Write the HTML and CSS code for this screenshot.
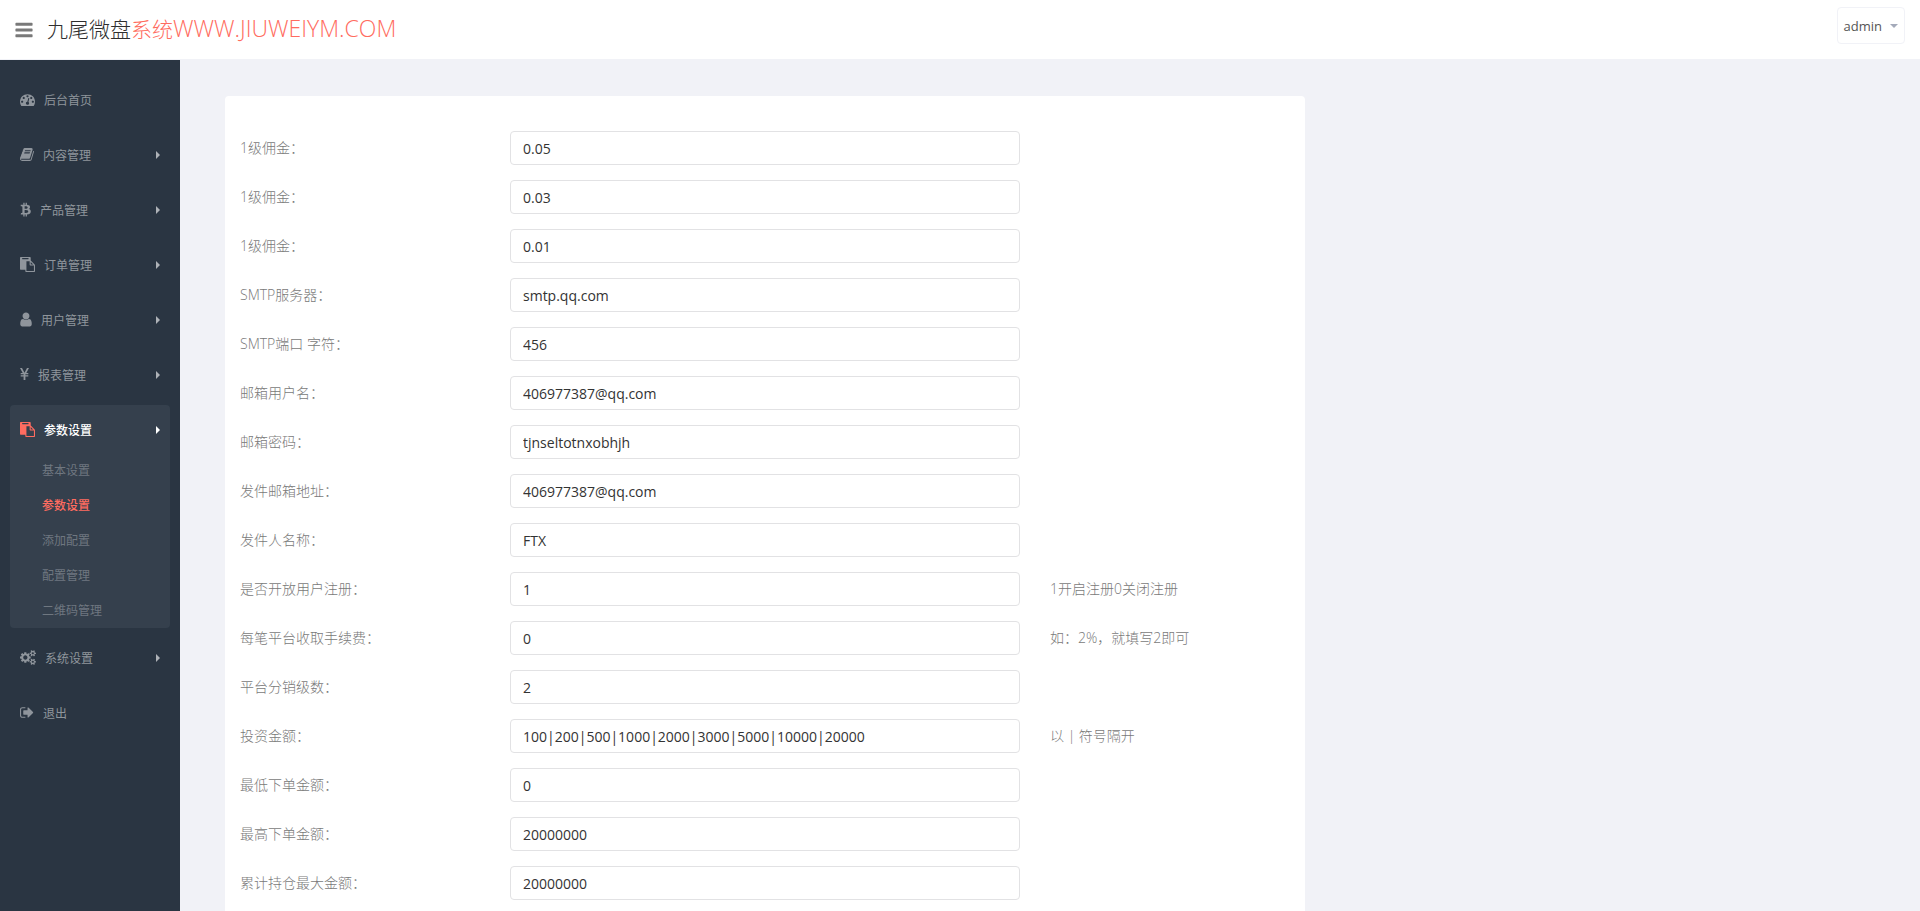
FILE: index.html
```html
<!DOCTYPE html>
<html lang="zh-CN">
<head>
    <meta charset="UTF-8">
    <meta name="viewport" content="width=device-width, initial-scale=1.0">
    <title>参数设置</title>
    <link rel="stylesheet" href="styles.css">
</head>
<body>
    <header class="header">
        <button type="button" class="toggle" aria-label="菜单">
            <svg width="18" height="20" viewBox="128 0 1536 1792"><path d="M1664 1344v128q0 26-19 45t-45 19h-1408q-26 0-45-19t-19-45v-128q0-26 19-45t45-19h1408q26 0 45 19t19 45zm0-512v128q0 26-19 45t-45 19h-1408q-26 0-45-19t-19-45v-128q0-26 19-45t45-19h1408q26 0 45 19t19 45zm0-512v128q0 26-19 45t-45 19h-1408q-26 0-45-19t-19-45v-128q0-26 19-45t45-19h1408q26 0 45 19t19 45z"/></svg>
        </button>
        <a href="#" class="logo">九尾微盘<span>系统<span class="domain">WWW.JIUWEIYM.COM</span></span></a>
        <button type="button" class="user-menu">admin<span class="caret"></span></button>
    </header>

    <div class="layout">
        <nav class="sidebar">
            <ul class="menu">
                <li>
                    <a href="#" class="menu-link">
                        <svg width="15" height="15" viewBox="0 0 1792 1792"><path d="M384 1152q0-53-37.5-90.5t-90.5-37.5-90.5 37.5-37.5 90.5 37.5 90.5 90.5 37.5 90.5-37.5 37.5-90.5zm192-448q0-53-37.5-90.5t-90.5-37.5-90.5 37.5-37.5 90.5 37.5 90.5 90.5 37.5 90.5-37.5 37.5-90.5zm428 481l101-382q6-26-7.5-48.5t-38.5-29.5-48 6.5-30 39.5l-101 382q-60 5-107 43.5t-63 98.5q-20 77 20 146t117 89 146-20 89-117q16-60-6-117t-72-91zm660-33q0-53-37.5-90.5t-90.5-37.5-90.5 37.5-37.5 90.5 37.5 90.5 90.5 37.5 90.5-37.5 37.5-90.5zm-640-640q0-53-37.5-90.5t-90.5-37.5-90.5 37.5-37.5 90.5 37.5 90.5 90.5 37.5 90.5-37.5 37.5-90.5zm448 192q0-53-37.5-90.5t-90.5-37.5-90.5 37.5-37.5 90.5 37.5 90.5 90.5 37.5 90.5-37.5 37.5-90.5zm320 448q0 261-141 483-19 29-54 29h-1402q-35 0-54-29-141-221-141-483 0-182 71-348t191-286 286-191 348-71 348 71 286 191 191 286 71 348z"/></svg>
                        <span>后台首页</span>
                    </a>
                </li>
                <li>
                    <a href="#" class="menu-link has-sub">
                        <svg width="14" height="15" viewBox="64 0 1664 1792"><path d="M1703 478q40 57 18 129l-275 906q-19 64-76.5 107.5t-122.5 43.5h-923q-77 0-148.5-53.5t-99.5-131.5q-24-67-2-127 0-4 3-27t4-37q1-8-3-21.5t-3-19.5q2-11 8-21t16.5-23.5 16.5-23.5q23-38 45-91.5t30-91.5q3-10 .5-30t-.5-28q3-11 17-28t17-23q21-36 42-92t25-90q1-9-2.5-32t.5-28q4-13 22-30.5t22-22.5q19-26 42.5-84.5t27.5-96.5q1-8-3-25.5t-2-26.5q2-8 9-18t18-23 17-21q8-12 16.5-30.5t15-35 16-36 19.5-32 26.5-23.5 36-11.5 47.5 5.5l-1 3q38-9 51-9h761q74 0 114 56t18 130l-274 906q-36 119-71.5 153.5t-128.5 34.5h-869q-27 0-38 15-11 16-1 43 24 70 144 70h923q29 0 56-15.5t35-41.5l300-987q7-22 5-57 38 15 59 43zm-1064 2q-4 13 2 22.5t20 9.5h608q13 0 25.5-9.5t16.5-22.5l21-64q4-13-2-22.5t-20-9.5h-608q-13 0-25.5 9.5t-16.5 22.5zm-83 256q-4 13 2 22.5t20 9.5h608q13 0 25.5-9.5t16.5-22.5l21-64q4-13-2-22.5t-20-9.5h-608q-13 0-25.5 9.5t-16.5 22.5z"/></svg>
                        <span>内容管理</span>
                    </a>
                </li>
                <li>
                    <a href="#" class="menu-link has-sub">
                        <svg width="11" height="15" viewBox="228 0 1280 1792"><path d="M1408 590q18 182-131 258 117 28 175 103t45 214q-7 71-32.5 125t-64.5 89-97 58.5-121.5 34.5-145.5 15v255h-154v-251q-80 0-122-1v252h-154v-255q-18 0-54-.5t-55-.5h-200l31-183h111q50 0 58-51v-402h16q-6-1-16-1v-287q-13-68-89-68h-111v-164l212 1q64 0 97-1v-252h154v247q82-2 122-2v-245h154v252q79 7 140 22.5t113 45 82.5 78 36.5 114.5zm-215 545q0-36-15-64t-37-46-57.5-30.5-65.5-18.5-74-9-69-3-64.5 1-47.5 1v338q8 0 37 .5t48 .5 53-1.5 58.5-4 57-8.5 55.5-14 47.5-21 39.5-30 24.5-40 9.5-51zm-71-476q0-33-12.5-58.5t-30.5-42-48-28-55-16.5-61.5-8-58-2.5-54 1-39.5.5v307q5 0 34.5.5t46.5 0 50-2 55-5.5 51.5-11 48.5-18.5 37-27 27-38.5 9-51z"/></svg>
                        <span>产品管理</span>
                    </a>
                </li>
                <li>
                    <a href="#" class="menu-link has-sub">
                        <svg width="15" height="15" viewBox="0 0 1792 1792"><path d="M768 1664h896v-640h-416q-40 0-68-28t-28-68v-416h-384v1152zm256-1440v-64q0-13-9.5-22.5t-22.5-9.5h-704q-13 0-22.5 9.5t-9.5 22.5v64q0 13 9.5 22.5t22.5 9.5h704q13 0 22.5-9.5t9.5-22.5zm256 672h299l-299-299v299zm512 128v672q0 40-28 68t-68 28h-960q-40 0-68-28t-28-68v-160h-544q-40 0-68-28t-28-68v-1344q0-40 28-68t68-28h1088q40 0 68 28t28 68v328q21 13 36 28l408 408q28 28 48 76t20 88z"/></svg>
                        <span>订单管理</span>
                    </a>
                </li>
                <li>
                    <a href="#" class="menu-link has-sub">
                        <svg width="12" height="15" viewBox="229 60 1334 1668"><path d="M1536 1399q0 109-62.5 187t-150.5 78h-854q-88 0-150.5-78t-62.5-187q0-85 8.5-160.5t31.5-152 58.5-131 94-89 134.5-34.5q131 128 313 128t313-128q76 0 134.5 34.5t94 89 58.5 131 31.5 152 8.5 160.5zm-256-887q0 159-112.5 271.5t-271.5 112.5-271.5-112.5-112.5-271.5 112.5-271.5 271.5-112.5 271.5 112.5 112.5 271.5z"/></svg>
                        <span>用户管理</span>
                    </a>
                </li>
                <li>
                    <a href="#" class="menu-link has-sub">
                        <svg width="9" height="15" viewBox="0 0 9 15"><path d="M0 1h2l2.500 4.700L7 1h2L6.300 6H8.300v1.200H5.400v1.100h2.900v1.200H5.400V13H3.600V9.500H.700V8.300h2.900V7.200H.700V6h2z"/></svg>
                        <span>报表管理</span>
                    </a>
                </li>
                <li class="active">
                    <a href="#" class="menu-link has-sub">
                        <svg width="15" height="15" viewBox="0 0 1792 1792"><path d="M768 1664h896v-640h-416q-40 0-68-28t-28-68v-416h-384v1152zm256-1440v-64q0-13-9.5-22.5t-22.5-9.5h-704q-13 0-22.5 9.5t-9.5 22.5v64q0 13 9.5 22.5t22.5 9.5h704q13 0 22.5-9.5t9.5-22.5zm256 672h299l-299-299v299zm512 128v672q0 40-28 68t-68 28h-960q-40 0-68-28t-28-68v-160h-544q-40 0-68-28t-28-68v-1344q0-40 28-68t68-28h1088q40 0 68 28t28 68v328q21 13 36 28l408 408q28 28 48 76t20 88z"/></svg>
                        <span>参数设置</span>
                    </a>
                    <ul class="submenu">
                        <li><a href="#">基本设置</a></li>
                        <li><a href="#" class="current">参数设置</a></li>
                        <li><a href="#">添加配置</a></li>
                        <li><a href="#">配置管理</a></li>
                        <li><a href="#">二维码管理</a></li>
                    </ul>
                </li>
                <li>
                    <a href="#" class="menu-link has-sub">
                        <svg width="16" height="15" viewBox="0 0 1920 1792"><path d="M896 896q0-106-75-181t-181-75-181 75-75 181 75 181 181 75 181-75 75-181zm768 512q0-52-38-90t-90-38-90 38-38 90q0 53 37.5 90.5t90.5 37.5 90.5-37.5 37.5-90.5zm0-1024q0-52-38-90t-90-38-90 38-38 90q0 53 37.5 90.5t90.5 37.5 90.5-37.5 37.5-90.5zm-384 421v185q0 10-7 19.5t-16 10.5l-155 24q-11 35-32 76 34 48 90 115 7 11 7 20 0 12-7 19-23 30-82.5 89.5t-78.5 59.5q-11 0-21-7l-115-90q-37 19-77 31-11 108-23 155-7 24-30 24h-186q-11 0-20-7.5t-10-17.5l-23-153q-34-10-75-31l-118 89q-7 7-20 7-11 0-21-8-144-133-144-160 0-9 7-19 10-14 41-53t47-61q-23-44-35-82l-152-24q-10-1-17-9.5t-7-19.5v-185q0-10 7-19.5t16-10.5l155-24q11-35 32-76-34-48-90-115-7-11-7-20 0-12 7-20 22-30 82-89t79-59q11 0 21 7l115 90q34-18 77-32 11-108 23-154 7-24 30-24h186q11 0 20 7.5t10 17.5l23 153q34 10 75 31l118-89q8-7 20-7 11 0 21 8 144 133 144 160 0 9-7 19-12 16-42 54t-45 60q23 48 34 82l152 23q10 2 17 10.5t7 19.5zm640 533v140q0 16-149 31-12 27-30 52 51 113 51 138 0 4-4 7-122 71-124 71-8 0-46-47t-52-68q-20 2-30 2t-30-2q-14 21-52 68t-46 47q-2 0-124-71-4-3-4-7 0-25 51-138-18-25-30-52-149-15-149-31v-140q0-16 149-31 13-29 30-52-51-113-51-138 0-4 4-7 4-2 35-20t59-34 30-16q8 0 46 46.5t52 67.5q20-2 30-2t30 2q51-71 92-112l6-2q4 0 124 70 4 3 4 7 0 25-51 138 17 23 30 52 149 15 149 31zm0-1024v140q0 16-149 31-12 27-30 52 51 113 51 138 0 4-4 7-122 71-124 71-8 0-46-47t-52-68q-20 2-30 2t-30-2q-14 21-52 68t-46 47q-2 0-124-71-4-3-4-7 0-25 51-138-18-25-30-52-149-15-149-31v-140q0-16 149-31 13-29 30-52-51-113-51-138 0-4 4-7 4-2 35-20t59-34 30-16q8 0 46 46.5t52 67.5q20-2 30-2t30 2q51-71 92-112l6-2q4 0 124 70 4 3 4 7 0 25-51 138 17 23 30 52 149 15 149 31z"/></svg>
                        <span>系统设置</span>
                    </a>
                </li>
                <li>
                    <a href="#" class="menu-link">
                        <svg width="14" height="15" viewBox="64 0 1664 1792"><path d="M704 1440q0 4 1 20t.5 26.5-3 23.5-10 19.5-20.500 6.500h-320q-119 0-203.500-84.500t-84.500-203.500v-704q0-119 84.500-203.500t203.500-84.500h320q13 0 22.500 9.500t9.500 22.500q0 4 1 20t.5 26.500-3 23.500-10 19.500-20.500 6.500h-320q-66 0-113 47t-47 113v704q0 66 47 113t113 47h312l11.500 1 11.500 3 8 5.500 7 9 2 13.500zm928-544q0 26-19 45l-544 544q-19 19-45 19t-45-19-19-45v-288h-448q-26 0-45-19t-19-45v-384q0-26 19-45t45-19h448v-288q0-26 19-45t45-19 45 19l544 544q19 19 19 45z"/></svg>
                        <span>退出</span>
                    </a>
                </li>
            </ul>
        </nav>

        <main class="main">
            <div class="row">
                <form class="panel">
                    <div class="form-group">
                        <label for="f1">1级佣金：</label>
                        <input type="text" id="f1" value="0.05">
                    </div>
                    <div class="form-group">
                        <label for="f2">1级佣金：</label>
                        <input type="text" id="f2" value="0.03">
                    </div>
                    <div class="form-group">
                        <label for="f3">1级佣金：</label>
                        <input type="text" id="f3" value="0.01">
                    </div>
                    <div class="form-group">
                        <label for="f4">SMTP服务器：</label>
                        <input type="text" id="f4" value="smtp.qq.com">
                    </div>
                    <div class="form-group">
                        <label for="f5">SMTP端口 字符：</label>
                        <input type="text" id="f5" value="456">
                    </div>
                    <div class="form-group">
                        <label for="f6">邮箱用户名：</label>
                        <input type="text" id="f6" value="406977387@qq.com">
                    </div>
                    <div class="form-group">
                        <label for="f7">邮箱密码：</label>
                        <input type="text" id="f7" value="tjnseltotnxobhjh">
                    </div>
                    <div class="form-group">
                        <label for="f8">发件邮箱地址：</label>
                        <input type="text" id="f8" value="406977387@qq.com">
                    </div>
                    <div class="form-group">
                        <label for="f9">发件人名称：</label>
                        <input type="text" id="f9" value="FTX">
                    </div>
                    <div class="form-group">
                        <label for="f10">是否开放用户注册：</label>
                        <input type="text" id="f10" value="1">
                        <span class="hint">1开启注册0关闭注册</span>
                    </div>
                    <div class="form-group">
                        <label for="f11">每笔平台收取手续费：</label>
                        <input type="text" id="f11" value="0">
                        <span class="hint">如：2%，就填写2即可</span>
                    </div>
                    <div class="form-group">
                        <label for="f12">平台分销级数：</label>
                        <input type="text" id="f12" value="2">
                    </div>
                    <div class="form-group">
                        <label for="f13">投资金额：</label>
                        <input type="text" id="f13" value="100|200|500|1000|2000|3000|5000|10000|20000">
                        <span class="hint">以 | 符号隔开</span>
                    </div>
                    <div class="form-group">
                        <label for="f14">最低下单金额：</label>
                        <input type="text" id="f14" value="0">
                    </div>
                    <div class="form-group">
                        <label for="f15">最高下单金额：</label>
                        <input type="text" id="f15" value="20000000">
                    </div>
                    <div class="form-group">
                        <label for="f16">累计持仓最大金额：</label>
                        <input type="text" id="f16" value="20000000">
                    </div>
                </form>
            </div>
        </main>
    </div>
</body>
</html>
```
FILE: styles.css
```css
* {
    box-sizing: border-box;
}
body {
    display: flex;
    flex-direction: column;
    height: 100vh;
    margin: 0;
    background: #f1f2f7;
    color: #797979;
    font-family: "Open Sans", "Noto Sans CJK SC", sans-serif;
    font-size: 14px;
    line-height: 20px;
}
a {
    text-decoration: none;
}
ul {
    list-style: none;
    margin: 0;
    padding: 0;
}
svg {
    display: block;
    fill: currentColor;
}

/* header */
.header {
    display: flex;
    flex: none;
    align-items: center;
    height: 60px;
    padding: 0 15px;
    background: #fff;
    border-bottom: 1px solid #f1f2f7;
}
.toggle {
    padding: 0;
    border: 0;
    background: none;
    color: #797979;
    cursor: pointer;
}
.logo {
    margin: 0 0 2px 14px;
    color: #2e2e2e;
    font-size: 21px;
    font-weight: 300;
    line-height: 30px;
}
.logo span {
    color: #ff6c60;
}
.logo .domain {
    font-size: 23px;
}
.user-menu {
    display: flex;
    align-items: center;
    gap: 8px;
    height: 37px;
    margin: 0 0 8px auto;
    padding: 0 6px;
    background: #fff;
    border: 1px solid #f1f2f7;
    border-radius: 4px;
    color: #555;
    font-family: inherit;
    font-size: 13px;
    cursor: pointer;
}
.caret {
    border-top: 4px solid #a4aaba;
    border-left: 4px solid transparent;
    border-right: 4px solid transparent;
}

/* sidebar */
.layout {
    display: flex;
    flex: 1;
    min-height: 0;
}
.sidebar {
    flex: none;
    width: 180px;
    padding: 15px 10px;
    background: #2a3542;
}
.menu > li {
    margin-bottom: 5px;
    border-radius: 4px;
}
.menu > li.active {
    background: #35404d;
}
.menu-link {
    display: flex;
    align-items: center;
    gap: 9px;
    height: 50px;
    padding: 0 10px;
    color: #8f959c;
    font-size: 12px;
}
.menu-link svg {
    margin-bottom: 2px;
}
.menu-link span {
    padding-top: 2px;
}
.has-sub::after {
    content: "";
    margin-left: auto;
    border-left: 4px solid #aeb2b7;
    border-top: 4px solid transparent;
    border-bottom: 4px solid transparent;
}
.active .menu-link {
    color: #fff;
    font-weight: 500;
}
.active .menu-link svg {
    color: #ff6c60;
}
.active .has-sub::after {
    border-left-color: #fff;
}
.submenu {
    margin-top: -2px;
}
.submenu a {
    display: block;
    padding-left: 32px;
    color: #6f7780;
    font-size: 12px;
    line-height: 35px;
}
.submenu .current {
    color: #ff6c60;
    font-weight: 500;
}

/* content */
.main {
    flex: 1;
    padding: 36px 60px 0 45px;
    overflow-y: auto;
    scrollbar-width: none;
}
.row {
    margin: 0 -15px;
}
.panel {
    width: calc(66.6667% - 30px);
    margin: 0 15px;
    padding: 35px 0 15px;
    background: #fff;
    border-radius: 4px;
}
.form-group {
    display: grid;
    grid-template-columns: 1fr 2fr 1fr;
    align-items: center;
    margin-bottom: 15px;
}
.form-group label,
.form-group .hint {
    padding: 0 15px;
    font-weight: 300;
}
.form-group input {
    height: 34px;
    margin: 0 15px;
    padding: 6px 12px;
    border: 1px solid #e2e2e4;
    border-radius: 4px;
    background: #fff;
    color: #333;
    font-family: inherit;
    font-size: 14px;
}
```
